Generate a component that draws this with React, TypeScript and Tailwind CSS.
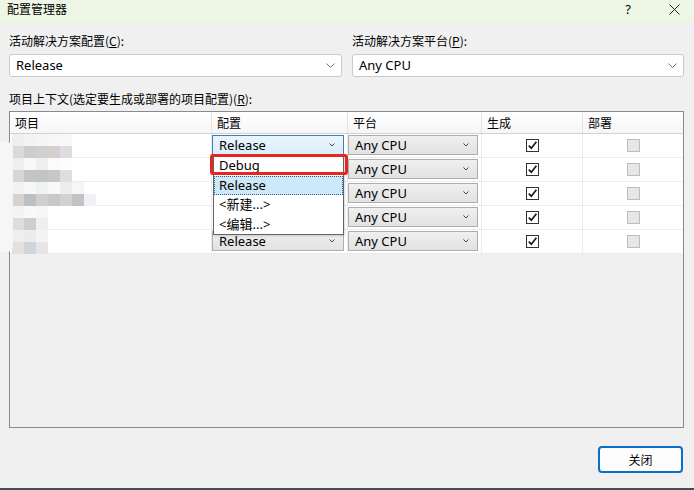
import React from 'react'

const Chevron = ({ w = 8, color = '#6b6b6b' }: { w?: number; color?: string }) => (
  <svg width={w} height={w / 2 + 1} viewBox={`0 0 ${w} ${w / 2 + 1}`}>
    <path d={`M0.5 0.5 L${w / 2} ${w / 2} L${w - 0.5} 0.5`} fill="none" stroke={color} strokeWidth="1" />
  </svg>
)

const Check = () => (
  <svg width="11" height="11" viewBox="0 0 11 11">
    <path d="M1.8 5.6 L4.3 8.2 L9.4 1.8" fill="none" stroke="#1a1a1a" strokeWidth="1.7" />
  </svg>
)

// mosaic blocks covering the project names
const mosaic: string[][] = [
  ['#efefef', '#f3f3f3', '#f5f5f5', '#f7f7f7', '#f8f8f8'],
  ['#dadada', '#cdcdcd', '#d1cfcf', '#d4d0ce', '#dcdce1'],
  ['#eeeeee', '#f8f8f8', '#efefef', '#fbfbfb', '#fdfdfd'],
  ['#d9d5d3', '#c4c4c4', '#c3c4c4', '#c7c7c7', '#dddedd'],
  ['#f2f2f2', '#f6f7f7', '#f0f1f1', '#f9f9f9', '#ededed', '#f6f6f6'],
  ['#d7d2cf', '#bdbfc0', '#cfcfd2', '#c8c9ca', '#d3d2cf', '#c3c3c3', '#eff1f6'],
  ['#f2f5f5', '#f9f9f9', '#f6f6f6'],
  ['#dcdedc', '#cfcdcd', '#edf0ee'],
  ['#efeeee', '#ebecec', '#f4f4f4'],
  ['#e4e1dc', '#cfd5dc', '#e6e6e6'],
]

function GridCombo({ text, active = false }: { text: string; active?: boolean }) {
  return (
    <div
      className={`mt-[1px] h-[20px] flex items-center pl-[6px] pr-[8px] border text-[13px] text-black ${
        active
          ? 'border-[#3c7fb1] bg-gradient-to-b from-[#eaf5fd] to-[#d9effc]'
          : 'border-[#adadad] bg-gradient-to-b from-[#efefef] to-[#e2e2e2]'
      }`}
    >
      <span className="flex-1 leading-none">{text}</span>
      <Chevron w={6} color="#444" />
    </div>
  )
}

export default function App() {
  const rows = [0, 1, 2, 3, 4]
  return (
    <div className="relative w-[694px] h-[490px] bg-[#f0f0f0] flex flex-col overflow-hidden text-black font-['Noto_Sans','Noto_Sans_CJK_SC',sans-serif]">
      {/* title bar */}
      <div className="h-[22px] shrink-0 bg-[#eef7e6] flex items-center pl-[7px] pr-[14px] text-[12px]">
        <span className="font-['Noto_Sans_CJK_SC',sans-serif] -mt-[4px]">配置管理器</span>
        <span className="ml-auto mr-[38px] text-[13px] -mt-[3px]">?</span>
        <svg width="11" height="11" viewBox="0 0 11 11" className="-mt-[3px]">
          <path d="M0.5 0.5 L10.5 10.5 M10.5 0.5 L0.5 10.5" stroke="#222" strokeWidth="1" />
        </svg>
      </div>

      <div className="flex-1 flex flex-col pl-[9px] pr-[10px] pt-[11px] text-[12px] font-['Noto_Sans_CJK_SC',sans-serif]">
        <div className="flex gap-[10px]">
          <div className="w-[333px]">
            <div className="h-[16px] leading-[16px]">
              活动解决方案配置(<span className="underline">C</span>):
            </div>
            <div className="mt-[5px] h-[23px] flex items-center bg-white border border-[#cacaca] rounded-[3px] pl-[6px] pr-[6px] text-[13px] font-['Noto_Sans',sans-serif]">
              <span className="flex-1">Release</span>
              <Chevron w={9} color="#707070" />
            </div>
          </div>
          <div className="w-[332px]">
            <div className="h-[16px] leading-[16px]">
              活动解决方案平台(<span className="underline">P</span>):
            </div>
            <div className="mt-[5px] h-[23px] flex items-center bg-white border border-[#cacaca] rounded-[3px] pl-[6px] pr-[6px] text-[13px] font-['Noto_Sans',sans-serif]">
              <span className="flex-1">Any CPU</span>
              <Chevron w={9} color="#707070" />
            </div>
          </div>
        </div>

        <div className="mt-[14px] h-[16px] leading-[16px]">
          项目上下文(选定要生成或部署的项目配置)(<span className="underline">R</span>):
        </div>

        {/* grid */}
        <div className="mt-[4px] w-[675px] h-[317px] border border-[#868a91] bg-[#f0f0f0]">
          <div className="relative">
            <div className="grid grid-cols-[202px_136px_134px_101px_100px] h-[22px] bg-gradient-to-b from-white to-[#f6f6f6] border-b border-[#d2d2d2] text-[12px]">
              {['项目', '配置', '平台', '生成', '部署'].map((h, i) => (
                <div key={h} className={`flex items-center pl-[5px] ${i < 4 ? 'border-r border-[#e3e3e3]' : ''}`}>
                  {h}
                </div>
              ))}
            </div>
            {rows.map((r) => (
              <div
                key={r}
                className="grid grid-cols-[202px_136px_134px_101px_100px] h-[24px] bg-white border-b border-[#ececec] font-['Noto_Sans',sans-serif]"
              >
                <div className="border-r border-[#ececec]" />
                <div className="pr-[3px] border-r border-[#ececec]">
                  {/* rows 2-4 are hidden under the open list */}
                  {(r === 0 || r === 4) && <GridCombo text="Release" active={r === 0} />}
                </div>
                <div className="pr-[3px] border-r border-[#ececec]">
                  <GridCombo text="Any CPU" />
                </div>
                <div className="flex items-center justify-center border-r border-[#ececec]">
                  <div className="w-[13px] h-[13px] border border-[#333] bg-white flex items-center justify-center">
                    <Check />
                  </div>
                </div>
                <div className="flex items-center justify-center">
                  <div className="w-[13px] h-[13px] border border-[#bcbcbc] bg-[#e6e6e6]" />
                </div>
              </div>
            ))}

            {/* mosaic over project names */}
            <div className="absolute left-[2px] top-[22px] flex flex-col">
              {mosaic.map((row, i) => (
                <div key={i} className="flex h-[12px]">
                  {row.map((c, j) => (
                    <div key={j} className="w-[12px] h-[12px]" style={{ backgroundColor: c }} />
                  ))}
                </div>
              ))}
            </div>

            {/* open dropdown list */}
            <div className="absolute left-[203px] top-[43px] w-[131px] border border-[#646464] bg-white text-[13px] font-['Noto_Sans','Noto_Sans_CJK_SC',sans-serif] shadow-[1px_1px_2px_rgba(0,0,0,0.15)]">
              <div className="h-[20px] flex items-center pl-[5px]">Debug</div>
              <div className="h-[19px] flex items-center pl-[4px] bg-[#cde8f8] border border-dotted border-[#2a5f8a]">Release</div>
              <div className="h-[20px] flex items-center pl-[5px]">&lt;新建...&gt;</div>
              <div className="h-[19px] flex items-center pl-[5px]">&lt;编辑...&gt;</div>
            </div>

            {/* red annotation frame */}
            <div className="absolute left-[200px] top-[42px] w-[138px] h-[21px] border-[3px] border-[#e8261f] rounded-[3px]" />
          </div>
        </div>

        <div className="mt-[18px] flex justify-end pr-[1px]">
          <button className="w-[85px] h-[27px] bg-[#fdfdfd] border-2 border-[#0a6fcb] rounded-[4px] text-[12px] font-['Noto_Sans_CJK_SC',sans-serif]">
            关闭
          </button>
        </div>
      </div>

      <div className="h-[2px] shrink-0 bg-[#454b58]" />

      {/* whitish smear on left edge */}
      <div className="absolute left-0 top-[142px] w-[13px] h-[110px] bg-[#f6f6f6] rounded-r-[6px]" />
    </div>
  )
}
